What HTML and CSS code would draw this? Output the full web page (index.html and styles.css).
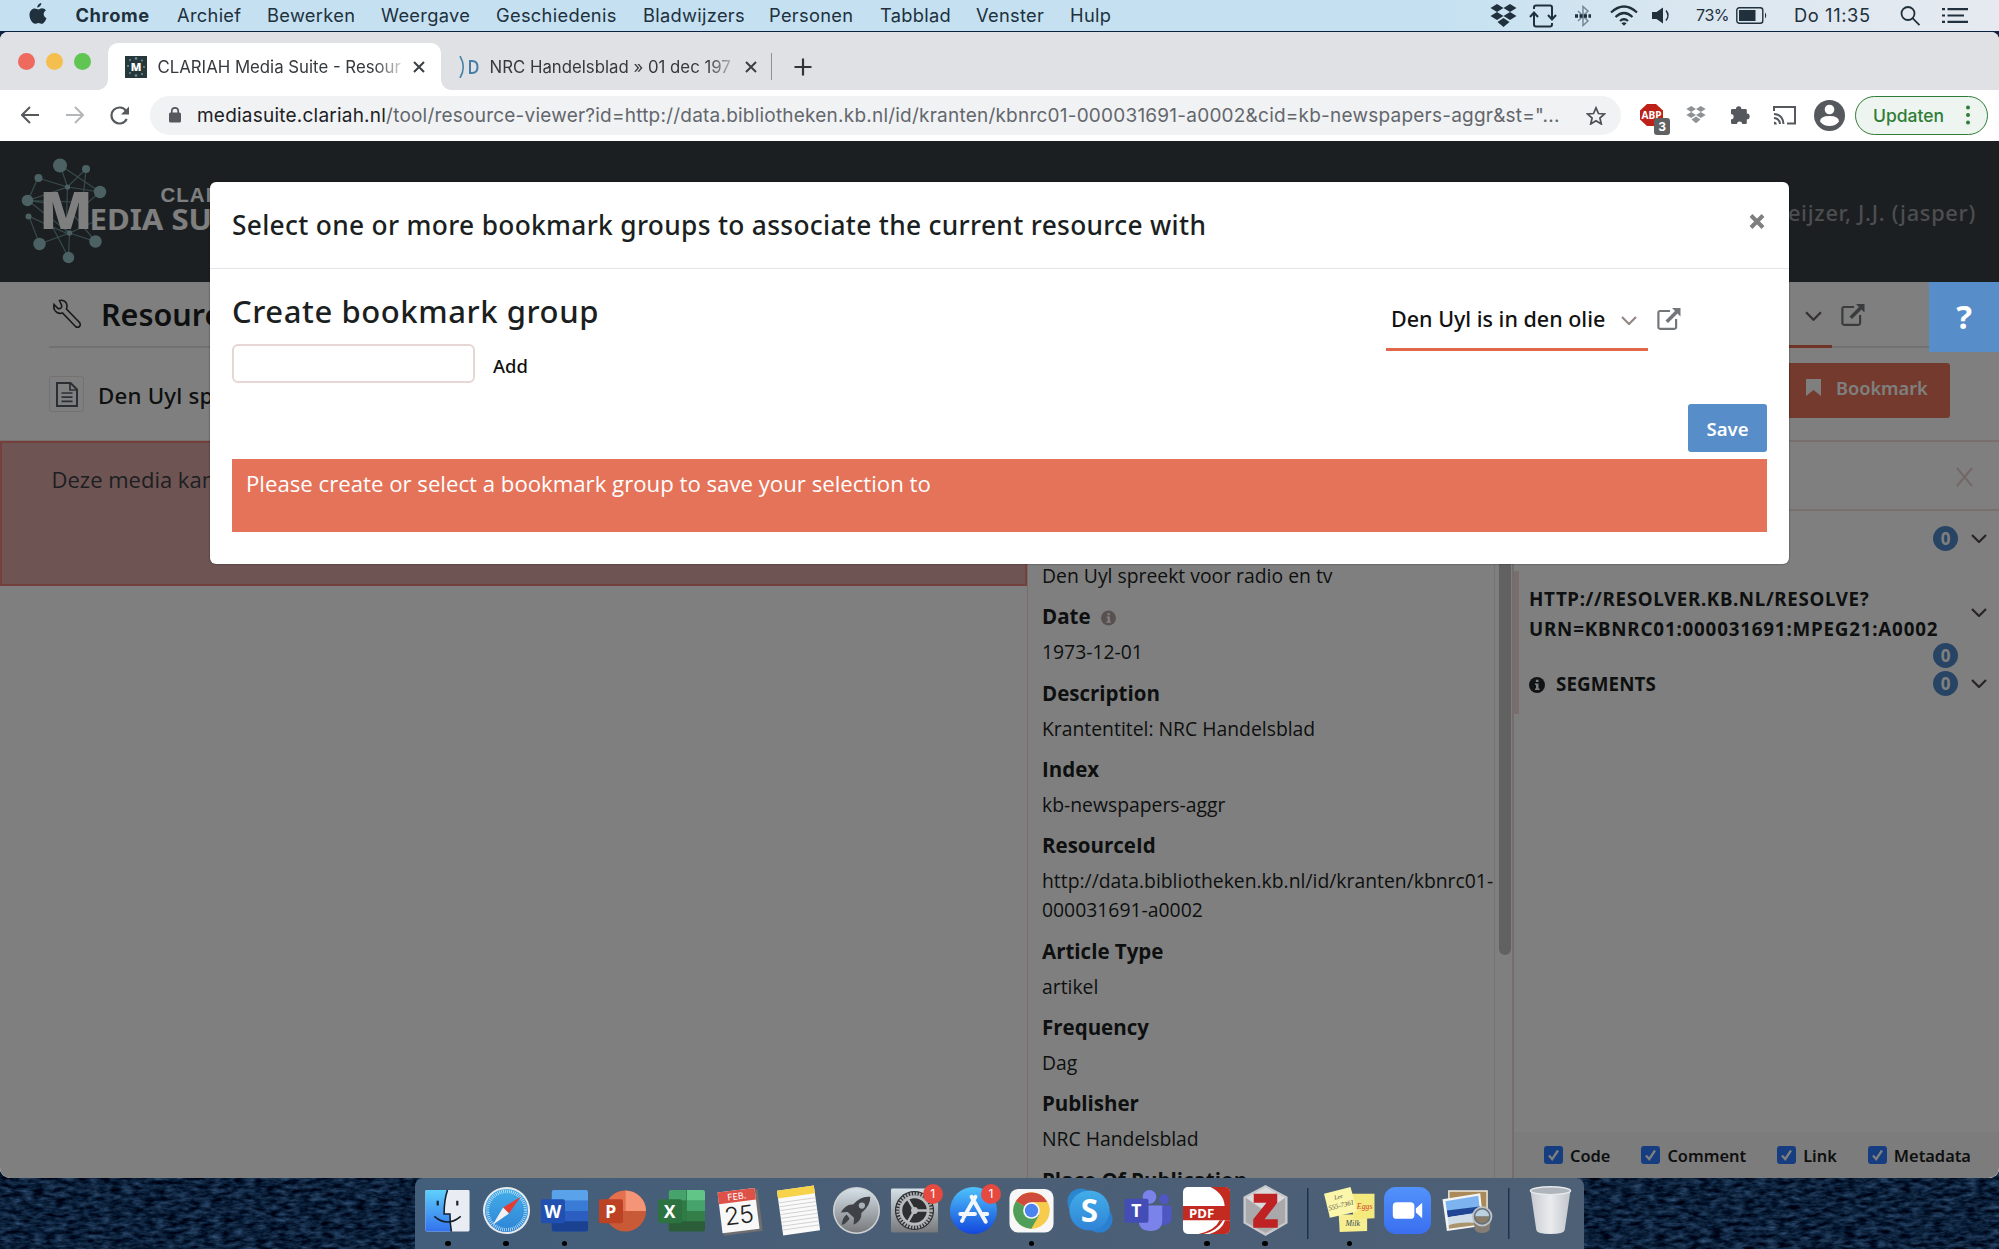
FILE: index.html
```html
<!DOCTYPE html>
<html lang="nl">
<head>
<meta charset="utf-8">
<title>CLARIAH Media Suite - Resource Viewer</title>
<link rel="stylesheet" href="styles.css">
</head>
<body>
<svg class="defs" width="0" height="0" aria-hidden="true">
  <defs>
    <symbol id="chevron" viewBox="0 0 16 9"><path d="M1 1l7 7 7-7" fill="none" stroke="currentColor" stroke-width="2.200"/></symbol>
    <symbol id="external" viewBox="0 0 24 22"><path d="M13 3H3a1.6 1.6 0 0 0-1.6 1.6v14.6A1.6 1.6 0 0 0 3 20.800h14.500a1.600 1.600 0 0 0 1.600-1.600V11" fill="none" stroke="currentColor" stroke-width="2.2"/><path d="M15 0h8.500v8.500l-3-3-9.500 9.500-2.500-2.500 9.500-9.500z" fill="currentColor"/></symbol>
    <symbol id="dropbox" viewBox="0 0 27 24"><path d="M7 0l6.500 4L7 8 .5 4zM20 0l6.500 4L20 8l-6.500-4zM7 8l6.500 4L7 16 .5 12zM20 8l6.500 4-6.500 4-6.500-4zM13.500 14l6 4-6 5-6-5z" fill="currentColor"/></symbol>
    <symbol id="info" viewBox="0 0 16 16"><circle cx="8" cy="8" r="8" fill="currentColor"/><path d="M6.900 2.800h2.600v2.300H6.900zM6 6.500h3.500v5h1V13H6v-1.500h1V8H6z" fill="#fff"/></symbol>
    <symbol id="tick" viewBox="0 0 19 18"><rect width="19" height="18" rx="3" fill="#2a7bff"/><path d="M5 9.500l3.200 3.700L14 4.500" fill="none" stroke="#fff" stroke-width="2.300"/></symbol>
    <linearGradient id="gBlue" x2="0" y2="1"><stop stop-color="#4fc3fb"/><stop offset="1" stop-color="#1247dd"/></linearGradient>
    <linearGradient id="gFinder" x2="0" y2="1"><stop stop-color="#5fd0fb"/><stop offset="1" stop-color="#3272ee"/></linearGradient>
    <linearGradient id="gGrey" x2="0" y2="1"><stop stop-color="#d5e0e8"/><stop offset="1" stop-color="#77797b"/></linearGradient>
    <linearGradient id="gZoom" x2="0" y2="1"><stop stop-color="#5292fb"/><stop offset="1" stop-color="#3a6ff0"/></linearGradient>
    <linearGradient id="gTrash" x2="1" y2="0"><stop stop-color="#cfd3d8"/><stop offset=".5" stop-color="#f6f6f7"/><stop offset="1" stop-color="#c8ccd1"/></linearGradient>
    <linearGradient id="gSkype" x2="0" y2="1"><stop stop-color="#43aee9"/><stop offset="1" stop-color="#2e83d6"/></linearGradient>
    <filter id="sea" x="0" y="0" width="1" height="1" color-interpolation-filters="sRGB"><feTurbulence type="fractalNoise" baseFrequency=".09 .24" numOctaves="3" seed="4"/><feColorMatrix values=".35 0 0 0 -.13  .45 0 0 0 -.1  .55 0 0 0 -.05  0 0 0 0 1"/></filter>
  </defs>
</svg>

<div class="desktop">
  <svg class="wallpaper" aria-hidden="true"><rect width="100%" height="100%" filter="url(#sea)"/></svg>

  <div class="menubar">
    <svg class="apple" viewBox="0 0 18 22"><path d="M12.300 0c.200 2-1.800 4.500-4 4.500C8.100 2.300 10.200.200 12.300 0zM13 5.300c1.500 0 3 .800 3.900 2.100-3.300 2-2.700 6.200.6 7.500-.8 2.400-2.600 5.800-4.600 5.800-1.300 0-1.800-.8-3.400-.8s-2.200.8-3.400.8C3.700 20.700.5 16.500.5 12c0-4 2.600-6.500 5.200-6.500 1.600 0 2.700 1 3.800 1 1 0 2.100-1.200 3.500-1.200z" fill="#20303c"/></svg>
    <div class="menus">
      <b>Chrome</b><span>Archief</span><span>Bewerken</span><span>Weergave</span><span>Geschiedenis</span><span>Bladwijzers</span><span>Personen</span><span>Tabblad</span><span>Venster</span><span>Hulp</span>
    </div>
    <div class="status">
      <svg width="27" height="24"><use href="#dropbox"/></svg>
      <svg width="28" height="24" viewBox="0 0 28 24" fill="none" stroke="currentColor" stroke-width="2"><path d="M5 5V3.500Q5 1.500 7 1.500H21Q23 1.500 23 3.500V15M19 11l4 4.500 4-4.500M23 19v1.500q0 2-2 2H7q-2 0-2-2V9M1 13l4-4.500L9 13"/></svg>
      <svg width="16" height="22" viewBox="0 0 16 22" fill="none" stroke="#6f8592" stroke-width="1.400"><path d="M3 6l10 10-5 4.500V1.500L13 6 3 16"/><path d="M0 11h16" stroke="#20303c" stroke-width="3.500" stroke-dasharray="3 1.500"/></svg>
      <svg width="28" height="21" viewBox="0 0 28 21" fill="none" stroke="currentColor" stroke-width="2.200"><path d="M1 7.500q13-12 26 0M5.500 12q8.500-8 17 0M10 16q4-3.500 8 0"/><path d="M14 20.800l-2.600-2.600q2.600-2 5.200 0z" fill="currentColor" stroke="none"/></svg>
      <svg width="19" height="17" viewBox="0 0 19 17"><path d="M0 5h4.500L11 .5v16L4.500 12H0z" fill="currentColor"/><path d="M14 3.500q4 5 0 10" fill="none" stroke="currentColor" stroke-width="1.500"/></svg>
      <span class="percent">73%</span>
      <svg width="32" height="17" viewBox="0 0 32 17"><rect x=".8" y=".8" width="26" height="15.400" rx="2.500" fill="none" stroke="currentColor" stroke-width="1.400"/><rect x="3" y="3" width="16.500" height="11" fill="currentColor"/><path d="M29 5.500q2.500 3 0 6z" fill="currentColor"/></svg>
      <span class="clock">Do 11:35</span>
      <svg width="21" height="20" viewBox="0 0 21 20" fill="none" stroke="currentColor" stroke-width="1.800"><circle cx="8" cy="7.500" r="6.500"/><path d="M12.500 12.200l7 7"/></svg>
      <svg width="26" height="15" viewBox="0 0 26 15" stroke="currentColor" stroke-width="2.200"><path d="M0 1.200h3M5.500 1.200H26M0 7.500h3M5.500 7.500H22M0 13.800h3M5.500 13.800H26"/></svg>
    </div>
  </div>

  <div class="window">
    <div class="tabstrip">
      <div class="lights"><i class="red"></i><i class="yellow"></i><i class="green"></i></div>
      <div class="tab active">
        <svg width="22" height="22" viewBox="0 0 22 22"><rect width="22" height="22" fill="#26383c"/><g fill="#6f9296"><circle cx="5" cy="4" r="1"/><circle cx="11" cy="2.500" r="1.300"/><circle cx="17" cy="4.500" r="1"/><circle cx="3" cy="10" r="1"/><circle cx="19" cy="11" r="1"/><circle cx="5" cy="17" r="1"/><circle cx="11" cy="19.500" r="1.300"/><circle cx="17" cy="18" r="1"/></g><text x="11" y="15" text-anchor="middle" font-size="11" font-weight="900" fill="#fff" font-family="Noto Sans">M</text></svg>
        <span class="tab-title">CLARIAH Media Suite - Resour</span>
        <svg class="x" viewBox="0 0 12 12"><path d="M1 1l10 10M11 1L1 11"/></svg>
      </div>
      <div class="tab">
        <svg width="20" height="22" viewBox="0 0 20 22" fill="none" stroke="#447ea6" stroke-width="2"><path d="M1 0q6.500 11 0 22" stroke-width="1.500"/><path d="M11 5v12h2q5.500 0 5.500-6T13 5z"/></svg>
        <span class="tab-title">NRC Handelsblad » 01 dec 197</span>
        <svg class="x" viewBox="0 0 12 12"><path d="M1 1l10 10M11 1L1 11"/></svg>
      </div>
      <svg class="plus" viewBox="0 0 18 18"><path d="M9 .500v17M.500 9h17" stroke="#333" stroke-width="2.200"/></svg>
    </div>

    <div class="toolbar">
      <svg width="18" height="18" viewBox="0 0 18 18" fill="none" stroke="#55595e" stroke-width="2"><path d="M18 9H1.500M9 1L1 9l8 8"/></svg>
      <svg width="18" height="18" viewBox="0 0 18 18" fill="none" stroke="#b4b7ba" stroke-width="2"><path d="M0 9h16.500M9 1l8 8-8 8"/></svg>
      <svg width="20" height="19" viewBox="0 0 20 19"><path d="M16.700 13A8 8 0 1 1 16 4.800" fill="none" stroke="#55595e" stroke-width="2.200"/><path d="M19 .500V8.500h-8z" fill="#55595e"/></svg>
      <div class="omnibox">
        <svg width="12" height="16" viewBox="0 0 12 16"><rect y="5.500" width="12" height="10" rx="1.500" fill="#55595e"/><path d="M2.800 6V4a3.200 3.200 0 0 1 6.400 0v2" fill="none" stroke="#55595e" stroke-width="1.700"/></svg>
        <span class="url"><em>mediasuite.clariah.nl</em>/tool/resource-viewer?id=http://data.bibliotheken.kb.nl/id/kranten/kbnrc01-000031691-a0002&amp;cid=kb-newspapers-aggr&amp;st="...</span>
        <svg width="20" height="19" viewBox="0 0 20 19"><path d="M10 1.800l2.500 5.700 6 .5-4.600 4 1.400 6L10 14.800 4.700 18l1.400-6L1.500 8l6-.5z" fill="none" stroke="#4c5054" stroke-width="1.700"/></svg>
      </div>
      <div class="extensions">
        <span class="abp"><svg width="23" height="22" viewBox="0 0 23 22"><path d="M7 0h9l7 6.500v9L16 22H7l-7-6.500v-9z" fill="#bd2117"/><text x="11.500" y="15" text-anchor="middle" font-size="10.500" font-weight="700" fill="#fff" font-family="Noto Sans" textLength="20" lengthAdjust="spacingAndGlyphs">ABP</text></svg><b>3</b></span>
        <svg class="grey" width="20" height="18"><use href="#dropbox"/></svg>
        <svg width="21" height="20" viewBox="0 0 21 20"><path d="M6 4a2.700 2.700 0 0 1 5.400 0h4.100q1.300 0 1.300 1.300v3.200a2.900 2.900 0 0 1 0 5.800v3.400q0 1.300-1.300 1.300h-3.300a2.600 2.600 0 0 0-5.200 0H2.200Q1 19 1 17.700v-3.400a2.600 2.600 0 0 0 0-5.200V5.300Q1 4 2.200 4z" fill="#55595e"/></svg>
        <svg width="23" height="19" viewBox="0 0 23 19" fill="none" stroke="#55595e" stroke-width="2"><path d="M1 5V1h21v16.500h-8M1 8q9 .5 9.500 10M1 12q5.500.5 6 6"/><path d="M1 15.500q2.500.2 3 3H1z" fill="#55595e" stroke="none"/></svg>
        <svg width="31" height="31" viewBox="0 0 31 31"><circle cx="15.500" cy="15.500" r="15.500" fill="#55595e"/><circle cx="15.500" cy="9.500" r="4.800" fill="#fff"/><path d="M6 21.500q0-5.500 9.500-5.500t9.500 5.500q-3.500 4.500-9.500 4.500T6 21.500z" fill="#fff"/></svg>
      </div>
      <div class="update">Updaten<i></i></div>
    </div>

    <div class="page">
      <header class="site-header">
        <svg class="logo" width="400" height="140" viewBox="0 0 400 140">
          <g stroke="#6e9597" stroke-width="1.200" fill="none"><path d="M60 24l7.500 22L86 28M38 37l29.500 9L28 59.500 38 37M60 24l40 27-32.500-5L28 59.500l60 2L100 51M86 28l-4 40M67.500 46L66 92l-37-16.500L39.500 103l30-11L28 59.500M69.500 92l26 8.500L72 72M69.500 92l-1 24.500L52 85M69.500 92l26-12M28 59.500l20 3"/></g>
          <g fill="#97c2c6"><circle cx="60" cy="24.500" r="7"/><circle cx="86" cy="28" r="4"/><circle cx="38.500" cy="37" r="4"/><circle cx="67.500" cy="46" r="2.600"/><circle cx="100" cy="51" r="6.200"/><circle cx="27.500" cy="59.500" r="5.800"/><circle cx="28.500" cy="75.500" r="3"/><circle cx="39.500" cy="103" r="6.200"/><circle cx="69.500" cy="92" r="2.700"/><circle cx="95.500" cy="100.500" r="6.200"/><circle cx="68.500" cy="116.500" r="5.700"/></g>
          <g fill="#fff" font-family="Noto Sans" font-weight="700"><text x="39.500" y="88" font-size="52" font-weight="900" textLength="53" lengthAdjust="spacingAndGlyphs">M</text><text x="89.500" y="88.500" font-size="29" textLength="170" lengthAdjust="spacingAndGlyphs">EDIA SUITE</text><text x="160.500" y="61" font-size="20.500" font-family="Liberation Sans" letter-spacing="1">CLARIAH</text></g>
        </svg>
        <span class="user">Keijzer, J.J. (jasper)</span>
      </header>

      <div class="title-row">
        <svg width="30" height="30" viewBox="0 0 30 30"><path d="M7.500 1.500q5-1 7 3 1 2.500 0 5.500L27.500 23.500q1.500 2 0 4-2 1.500-4 0L10.500 14q-3 1-5.500-.5-4-2.500-3-8L6 9.500q2 .5 3-.5t.5-3z" fill="none" stroke="#333" stroke-width="1.600"/></svg>
        <h1>Resource Viewer</h1>
        <div class="page-picker"><svg width="17" height="10"><use href="#chevron"/></svg></div>
        <svg class="ext" width="24" height="22"><use href="#external"/></svg>
      </div>
      <div class="doc-row">
        <div class="doc-icon"><svg width="22" height="25" viewBox="0 0 22 25" fill="none" stroke="#555e69" stroke-width="2"><path d="M1 1h13.500L21 7.500V24H1z"/><path d="M14 1v7h7M5.500 11h11M5.500 15.200h11M5.500 19.400h11" stroke-width="1.700"/></svg></div>
        <h2>Den Uyl spreekt</h2>
        <div class="bookmark-btn"><svg width="15" height="17" viewBox="0 0 15 17"><path d="M0 0h15v17l-7.500-6L0 17z" fill="#fff"/></svg>Bookmark</div>
      </div>

      <div class="columns">
        <section class="viewer"><div class="error">Deze media kan</div></section>
        <section class="meta">
          <dl>
            <dd class="lead">Den Uyl spreekt voor radio en tv</dd>
            <dt>Date <svg width="15" height="16"><use href="#info"/></svg></dt><dd>1973-12-01</dd>
            <dt>Description</dt><dd>Krantentitel: NRC Handelsblad</dd>
            <dt>Index</dt><dd>kb-newspapers-aggr</dd>
            <dt>ResourceId</dt><dd>http://data.bibliotheken.kb.nl/id/kranten/kbnrc01-<br>000031691-a0002</dd>
            <dt>Article Type</dt><dd>artikel</dd>
            <dt>Frequency</dt><dd>Dag</dd>
            <dt>Publisher</dt><dd>NRC Handelsblad</dd>
            <dt>Place Of Publication</dt>
          </dl>
          <div class="scrollbar"><i></i></div>
        </section>
        <section class="annotations">
          <div class="close-row"><svg width="17" height="20" viewBox="0 0 17 20"><path d="M1 1l15 18M16 1L1 19" stroke="#e8d0cc" stroke-width="2"/></svg></div>
          <div class="row first"><b class="count">0</b><svg width="16" height="9"><use href="#chevron"/></svg></div>
          <div class="group">
            <div class="row resource"><span><q class="l1">http://resolver.kb.nl/resolve?</q><br><q class="l2">urn=KBNRC01:000031691:mpeg21:a0002</q></span><svg width="16" height="9"><use href="#chevron"/></svg></div>
            <div class="row only"><b class="count">0</b></div>
            <div class="row segments"><svg class="i" width="16" height="16"><use href="#info"/></svg><span>Segments</span><b class="count">0</b><svg width="16" height="9"><use href="#chevron"/></svg></div>
          </div>
          <footer class="filters">
            <label><svg width="19" height="18"><use href="#tick"/></svg>Code</label>
            <label><svg width="19" height="18"><use href="#tick"/></svg>Comment</label>
            <label><svg width="19" height="18"><use href="#tick"/></svg>Link</label>
            <label><svg width="19" height="18"><use href="#tick"/></svg>Metadata</label>
          </footer>
        </section>
      </div>

      <div class="backdrop"></div>
      <div class="help">?</div>
      <div class="modal">
        <div class="modal-head"><h3>Select one or more bookmark groups to associate the current resource with</h3><svg width="16" height="15" viewBox="0 0 16 15"><path d="M2 1.500l12 12M14 1.500l-12 12" stroke="#7f7f7f" stroke-width="4"/></svg></div>
        <div class="modal-body">
          <div class="modal-top">
            <div class="create"><h4>Create bookmark group</h4><div class="create-row"><input type="text"><span>Add</span></div></div>
            <div class="picker"><div class="select">Den Uyl is in den olie<svg width="16" height="9"><use href="#chevron"/></svg></div><svg class="ext" width="24" height="22"><use href="#external"/></svg></div>
          </div>
          <div class="save">Save</div>
          <div class="alert">Please create or select a bookmark group to save your selection to</div>
        </div>
      </div>
    </div>
  </div>

  <div class="dock">
    <div class="app run"><svg viewBox="0 0 50 50"><rect x="2.500" y="4" width="45" height="42.500" rx="1.500" fill="#e9edf3"/><path d="M25 4H4q-1.500 0-1.500 1.500V45q0 1.500 1.500 1.500h25q-1.500-8-1.500-18h-6q0-14 3.500-24.500z" fill="url(#gFinder)"/><path d="M15 15v5M35 15v5" stroke="#15202c" stroke-width="2.200"/><path d="M11.500 31q13.500 11.500 27 0M25 4q-3.500 10.500-3.500 24.500h6q0 10 1.500 18" fill="none" stroke="#15202c" stroke-width="1.600"/></svg></div>
    <div class="app run"><svg viewBox="0 0 50 50"><circle cx="25" cy="25" r="24" fill="#e8eaec"/><circle cx="25" cy="25" r="22" fill="url(#gSkype)"/><circle cx="25" cy="25" r="19.500" fill="none" stroke="#d7eefb" stroke-width="3.500" stroke-dasharray=".7 1.300"/><path d="M39.500 11L21.500 22l6 6z" fill="#e23c34"/><path d="M11 39.500L21.500 22l6 6z" fill="#f1f1f1"/></svg></div>
    <div class="app run"><svg viewBox="0 0 50 50"><rect x="12" y="4" width="37" height="42.500" rx="2" fill="#2b5ec0"/><path d="M12 15V6q0-2 2-2h33q2 0 2 2v9z" fill="#5aa2ea"/><path d="M12 15h37v10.500H12z" fill="#3a7bd5"/><path d="M12 36h37v8.500q0 2-2 2H14q-2 0-2-2z" fill="#1a4290"/><rect x="1" y="13.500" width="24.500" height="24.500" rx="2" fill="#1f50b2"/><text class="glyph" x="13" y="32.500">W</text></svg></div>
    <div class="app"><svg viewBox="0 0 50 50"><circle cx="28" cy="25.500" r="21" fill="#c85a38"/><path d="M28 25.500V4.500a21 21 0 0 0-21 21z" fill="#e4704d"/><path d="M28 25.500V4.500a21 21 0 0 1 21 21z" fill="#f39576"/><rect x="1" y="13.500" width="24.500" height="24.500" rx="2" fill="#bd4224"/><text class="glyph" x="13" y="32.500">P</text></svg></div>
    <div class="app"><svg viewBox="0 0 50 50"><rect x="12" y="4" width="37" height="42.500" rx="2" fill="#2b5e38"/><path d="M12 15V6q0-2 2-2h16v11z" fill="#46a36b"/><path d="M30.500 4H47q2 0 2 2v9H30.500z" fill="#61c588"/><path d="M12 15h19v21H12z" fill="#2f7a45"/><path d="M30.500 15H49v10.500H30.500z" fill="#46a36b"/><path d="M30.500 25.500H49V36H30.500z" fill="#347e4a"/><rect x="1" y="13.500" width="24.500" height="24.500" rx="2" fill="#2c7341"/><text class="glyph" x="13" y="32.500">X</text></svg></div>
    <div class="app"><svg viewBox="0 0 50 50"><g transform="rotate(-7 25 25)"><rect x="6" y="5.500" width="40" height="43" fill="#6d6f70"/><rect x="5" y="4" width="38" height="42" fill="#f8f8f8"/><rect x="5" y="4" width="38" height="12" fill="#de5148"/><text x="24" y="13.500" text-anchor="middle" font-size="9" fill="#fff" font-family="Inter">FEB.</text><text x="24" y="38.500" text-anchor="middle" font-size="25" fill="#222" font-weight="300" font-family="Inter">25</text></g></svg></div>
    <div class="app"><svg viewBox="0 0 50 50"><g transform="rotate(-8 25 25)"><rect x="6" y="2" width="38" height="46" fill="#fafafa"/><path d="M6 2h38v8H6z" fill="#f7d349"/><path d="M6 14.500h38M6 18.500h38M6 22.500h38M6 26.500h38M6 30.500h38M6 34.500h38M6 38.500h38M6 42.500h38" stroke="#c9c9c9" stroke-width=".8"/></g></svg></div>
    <div class="app"><svg viewBox="0 0 50 50"><circle cx="25" cy="25" r="24" fill="#cfd2d4"/><circle cx="25" cy="25" r="22.500" fill="url(#gGrey)"/><path d="M39 11q-10-1-17.500 8-7-1-12.500 8l7-.5 6.500 6-.5 7q8.500-4 8-12Q39.500 20 39 11zM15 29q-4.500 3-5 11 5-2 8-6.500z" fill="#3f4347"/><circle cx="30.500" cy="20" r="3.200" fill="#aab0b4"/></svg></div>
    <div class="app"><svg viewBox="0 0 50 50"><rect x="1" y="2.500" width="48" height="45" rx="1.500" fill="url(#gGrey)"/><circle cx="25" cy="25" r="20" fill="#2d2f31"/><circle cx="25" cy="25" r="17" fill="none" stroke="#a9acae" stroke-width="3.500" stroke-dasharray="1.800 1.200"/><circle cx="25" cy="25" r="14" fill="none" stroke="#b9bcbe" stroke-width="3"/><path d="M25 25L18 13M25 25h14M25 25l-7 12" stroke="#b9bcbe" stroke-width="2.500"/><circle cx="25" cy="25" r="3.500" fill="#b9bcbe"/></svg><b>1</b></div>
    <div class="app"><svg viewBox="0 0 50 50"><circle cx="25" cy="25" r="24" fill="url(#gBlue)"/><g stroke="#f3f6fa" stroke-width="4" stroke-linecap="round"><path d="M27 11L15 32M23 11l14.500 25.500M11.500 28.500h15M35 28.500h4M14 34.500l-.8 1.200"/></g></svg><b>1</b></div>
    <div class="app run"><svg viewBox="0 0 50 50"><rect x="2.500" y="3" width="45" height="44.500" rx="9" fill="#f7f7f7"/><circle cx="25" cy="25" r="18.500" fill="#f7cb4c"/><path d="M25 25L9 15.500A18.500 18.500 0 0 1 41.200 16.500H25z" fill="#cf4b3c"/><path d="M9 15.500A18.500 18.500 0 0 0 25 43.500l8-14-8-4.500z" fill="#4f9f5b"/><path d="M41.200 16.500H25l8 13-8 14A18.500 18.500 0 0 0 41.200 16.500z" fill="#f7cb4c"/><circle cx="25" cy="25" r="8.500" fill="#f7f7f7"/><circle cx="25" cy="25" r="6.800" fill="#4b84ee"/></svg></div>
    <div class="app"><svg viewBox="0 0 50 50"><circle cx="16" cy="16" r="13.500" fill="#2a87cf"/><circle cx="35" cy="34" r="13.500" fill="#2a7fd0"/><circle cx="25" cy="25" r="20.500" fill="url(#gSkype)"/><text x="25" y="36.500" text-anchor="middle" font-size="32" font-weight="700" fill="#fff" font-family="Noto Sans">S</text></svg></div>
    <div class="app"><svg viewBox="0 0 50 50"><circle cx="41" cy="13.500" r="5" fill="#4e57c2"/><path d="M34 20h14.500v12q0 8-8 8H34z" fill="#4e57c2"/><circle cx="26" cy="11" r="7" fill="#7b83eb"/><path d="M15 20h24v15q0 11-12 11T15 35z" fill="#7b83eb"/><rect x=".500" y="13" width="24.500" height="24.500" rx="2" fill="#444db5"/><text class="glyph" x="12.700" y="32">T</text></svg></div>
    <div class="app run"><svg viewBox="0 0 50 50"><rect x="1" y="1" width="48" height="48" rx="5" fill="#fff"/><path d="M29 1h15q5 0 5 5v14.500h-5.500Q43 8 29 1zM1 20.500h48V35H1z" fill="#c32a20"/><path d="M44 35h5v9q0 5-5 5H28q13-4 16-14zM17 49q17-4 21.500-14H42Q36 46 22 49z" fill="#c32a20"/><text x="20" y="32.500" text-anchor="middle" font-size="13.500" font-weight="700" fill="#fff" font-family="Noto Sans">PDF</text></svg></div>
    <div class="app run"><svg viewBox="0 0 50 50"><path d="M25-1l22.500 12v27L25 51 2.500 38V11z" fill="#c8c9cc"/><path d="M25 1l20 11v25L25 48 5 37V12z" fill="#a9a8aa"/><path d="M25 1l20 11-20 14L5 12z" fill="#d9dadd"/><path d="M13 8h24v9L24 34h13.500v8.500H12.500V34L26 17H13z" fill="#bf2222"/></svg></div>
    <i class="sep"></i>
    <div class="app run"><svg viewBox="0 0 50 50"><path d="M14 29h29v17l-28 1z" fill="#f6ee90"/><path d="M27 8h23.500v25L29 34z" fill="#f4e97d"/><path d="M-1 8l27-7 7 25-28 6.500z" fill="#fbf6a9"/><g font-family="Liberation Serif" font-style="italic"><text x="32.500" y="23" font-size="8" fill="#d2452b">Eggs</text><text x="21" y="41" font-size="8" fill="#345">Milk</text><text x="4" y="25" font-size="7" fill="#444" transform="rotate(-14 4 25)">555-7361</text><text x="10" y="14" font-size="6" fill="#444" transform="rotate(-14 10 14)">Lee</text></g></svg></div>
    <div class="app"><svg viewBox="0 0 50 50"><rect x="1" y="1" width="48" height="48" rx="12" fill="url(#gZoom)"/><rect x="10" y="16.500" width="22" height="17" rx="4" fill="#fff"/><path d="M33.500 23l6.500-6v16l-6.500-6z" fill="#fff"/></svg></div>
    <div class="app"><svg viewBox="0 0 50 50"><path d="M7 5h39v34H7z" fill="#a98a58" stroke="#efe9dc" stroke-width="1.500"/><path d="M.500 13.500L39 7.500l3.500 33-37.500 5.500z" fill="#f4f4f4"/><path d="M3.500 15.500L37 10l1.500 13-33 6z" fill="#7db3ee"/><path d="M5 25l33.500-4 1 6-33.500 5z" fill="#1f4694"/><path d="M6 32q15-3 33.500-5l1 9L7 43z" fill="#cfdde8"/><path d="M7 40q10-4 34-2v1L7 43.500z" fill="#a9946c"/><path d="M32 33h18l-1.500 12q-2.500 3-7.500 3t-7.500-3z" fill="#847d73"/><circle cx="41" cy="31" r="9.500" fill="#62707d" stroke="#bfc3c6" stroke-width="1.800"/><path d="M34 31a7 7 0 0 1 14 0z" fill="#bcd0e0"/><path d="M34 31a7 7 0 0 0 14 0z" fill="#8a7d68"/></svg></div>
    <i class="sep"></i>
    <div class="app"><svg viewBox="0 0 50 50"><path d="M4.500 4l6 41q.5 4 14.500 4t14.500-4l6-41z" fill="url(#gTrash)" opacity=".93"/><ellipse cx="25" cy="4.800" rx="20.500" ry="4" fill="#aeb5bc" stroke="#e6e8ea" stroke-width="1.500"/></svg></div>
  </div>
</div>
</body>
</html>
```
FILE: styles.css
```css
* { box-sizing: border-box; }
html, body { margin: 0; height: 100%; overflow: hidden; }
body { font-family: "Inter", "Noto Sans", sans-serif; color: #1b1f22; }
h1, h2, h3, h4, dl, dd { margin: 0; font-weight: 500; }
svg { display: block; flex: none; }
.defs { position: absolute; }

.desktop { position: relative; width: 1999px; height: 1249px; background: #0c2340; overflow: hidden; }
.wallpaper { position: absolute; left: 0; top: 1160px; width: 100%; height: 89px; }

/* macOS menu bar */
.menubar { position: relative; display: flex; align-items: center; height: 31px; padding-left: 29px; background: linear-gradient(90deg, #c5e1f1 0 72%, #dbe7f0 85%, #e6eaf0); color: #20303c; font-size: 18.3px; line-height: 31px; white-space: nowrap; }
.apple { width: 18px; height: 22px; margin: -3px 28.500px 0 0; }
.menus { display: grid; grid-template-columns: 101.500px 90px 114px 115px 147px 126px 111px 96px 94px 60px; letter-spacing: .300px; }
.menus b { letter-spacing: .6px; }
.status { position: absolute; right: 31px; top: 0; height: 31px; display: flex; align-items: center; }
.status svg:nth-child(2) { margin-left: 12px; }
.status svg:nth-child(3) { margin-left: 18px; }
.status svg:nth-child(4) { margin-left: 19px; margin-top: -1px; }
.status svg:nth-child(5) { margin-left: 14px; }
.percent { width: 40px; margin-left: 25px; font-size: 16px; letter-spacing: -.4px; }
.clock { width: 80px; margin: 0 26px 0 26px; letter-spacing: .6px; }
.status svg:last-child { margin-left: 21px; }

/* browser window */
.window { position: relative; height: 1146px; margin-top: 1px; border-radius: 8px 8px 10px 10px; overflow: hidden; background: #fff; }
.tabstrip { display: flex; align-items: flex-end; height: 58px; background: #dfe1e5; }
.lights { display: flex; gap: 11px; padding: 0 17.500px 20px 17.500px; }
.lights i { width: 17px; height: 17px; border-radius: 50%; }
.red { background: #ee6a5f; }
.yellow { background: #f5bf4f; }
.green { background: #61c554; }
.tab { position: relative; display: flex; align-items: center; height: 47px; width: 331px; padding: 0 15px 0 18px; font-size: 16.800px; color: #36393d; }
.tab.active { width: 333px; padding: 0 16px 0 17px; background: #fff; border-radius: 10px 10px 0 0; }
.tab.active::before, .tab.active::after { content: ""; position: absolute; bottom: 0; width: 10px; height: 10px; background: radial-gradient(circle at 0 0, transparent 9.500px, #fff 10px); }
.tab.active::before { left: -10px; }
.tab.active::after { right: -10px; transform: scaleX(-1); }
.tab-title { width: 246px; margin: 0 auto 0 10.500px; white-space: nowrap; -webkit-mask-image: linear-gradient(90deg, #000 88%, #0002); mask-image: linear-gradient(90deg, #000 88%, #0002); }
.x { width: 12px; height: 12px; stroke: #3c3f43; stroke-width: 2; }
.plus { width: 18px; height: 18px; margin: 0 0 14.500px 22px; }
.tab:not(.active)::after { content: ""; position: absolute; right: 0; top: 10px; width: 1px; height: 27px; background: #8d9094; }
.toolbar { display: flex; align-items: center; height: 51px; padding: 0 11px 1px 21px; background: #fff; }
.toolbar > svg + svg { margin-left: 27px; }
.toolbar > svg:nth-child(3) { margin-left: 26px; }
.omnibox { display: flex; align-items: center; width: 1471px; height: 39px; margin-left: 20px; padding: 0 15px 0 19px; border-radius: 20px; background: #f1f2f4; }
.url { width: 1390px; margin: 0 auto 0 16px; font-size: 19px; letter-spacing: .22px; white-space: nowrap; color: #63676c; }
.url em { font-style: normal; color: #202124; }
.extensions { display: flex; align-items: center; margin-left: 19px; }
.abp { position: relative; margin-right: 23px; }
.abp b { position: absolute; left: 14px; top: 14px; width: 16px; height: 17px; border-radius: 3px; background: #5f6163; color: #fff; font-size: 12px; line-height: 17px; text-align: center; }
.grey { color: #8f9295; margin-right: 24px; }
.extensions svg:nth-child(3) { margin-right: 22px; }
.extensions svg:nth-child(4) { margin-right: 18px; }
.update { display: flex; align-items: center; width: 133px; height: 39px; margin-left: auto; padding: 0 17px 0 17px; border: 1.500px solid #2f7d38; border-radius: 20px; background: #eef4ef; color: #2f7d38; font-size: 17.500px; font-weight: 500; }
.update i { width: 4px; height: 4px; margin-left: auto; border-radius: 50%; background: #2f7d38; box-shadow: 0 -7.500px #2f7d38, 0 7.500px #2f7d38; }

/* site */
.page { position: relative; height: 1037px; background: #fff; font-family: "Noto Sans", sans-serif; }
.site-header { display: flex; justify-content: space-between; height: 140.500px; background: #363e44; }
.user { padding: 54px 23px 0 0; font-size: 21.800px; line-height: 36px; font-weight: 500; letter-spacing: .700px; color: #9a9c9e; }
.title-row { display: flex; align-items: center; height: 66.500px; margin: 0 70px 0 49px; padding-left: 3px; border-bottom: 2px solid #e5e0e0; }
.title-row h1 { margin: 1px auto 0 19px; font-size: 30.500px; font-weight: 600; letter-spacing: 0; }
.page-picker { display: flex; align-items: center; justify-content: flex-end; align-self: flex-start; width: 60px; height: 66px; padding: 6px 10px 0 0; border-bottom: 3.500px solid #e2674a; color: #6d6260; }
.title-row .ext { margin: 3px 64px 0 9px; color: #73777b; }
.doc-row { display: flex; align-items: center; height: 92px; padding: 0 49px; }
.doc-icon { display: grid; place-items: center; width: 35px; height: 36px; border: 1.500px solid #e6e2e2; border-radius: 3px; }
.doc-row h2 { margin: 2px 0 0 14px; font-size: 22.300px; font-weight: 500; letter-spacing: .2px; }
.bookmark-btn { display: flex; align-items: center; width: 180px; height: 55px; margin: -8px 0 0 auto; padding: 0 0 5px 36px; gap: 15px; border-radius: 3px; background: #e7745a; color: #fff; font-size: 18.200px; font-weight: 600; }
.columns { display: flex; height: 738px; border-top: 2px solid #f0dedc; }
.viewer { width: 1027px; }
.error { height: 145px; margin-top: -1px; padding: 19px 49.500px; border: 2px solid #e8807c; background: #dea8a8; font: 22px/34px "Open Sans", sans-serif; color: #3b4044; }
.meta { display: flex; width: 487px; border: solid #ecd9d7; border-width: 0 2px 0 1.500px; font-family: "Open Sans", sans-serif; overflow: hidden; }
.meta dl { width: 466px; padding: 119px 0 0 14px; font-size: 19.350px; line-height: 29.300px; white-space: nowrap; }
.meta dt { display: flex; align-items: center; gap: 10px; margin-bottom: 5.700px; padding-top: 1px; font-size: 20.500px; font-weight: 700; }
.meta dt svg { color: #b3a3a0; margin-top: 2px; }
.meta dd { margin-bottom: 11px; }
.scrollbar { flex: 1; border-left: 1px solid #f0e4e3; padding-left: 4px; }
.scrollbar i { display: block; width: 12px; height: 513px; border-radius: 0 0 6px 6px; background: #c3c3c3; }
.annotations { flex: 1; display: flex; flex-direction: column; color: #1b1f22; }
.close-row { display: flex; align-items: center; justify-content: flex-end; height: 69px; padding: 3px 26px 0 0; border-bottom: 2px solid #f0dedc; }
.row { display: flex; align-items: center; height: 55px; padding: 0 12px 0 10px; color: #51494a; }
.row > svg:last-child { margin-left: 13px; }
.count { display: grid; place-items: center; width: 25px; height: 25px; margin-left: auto; border-radius: 50%; background: #5189c9; color: #fff; font-size: 17px; line-height: 25px; font-weight: 700; }
.group { border-left: 5px solid #f0dcdb; height: 143px; margin-top: 5px; }
.row span { font-size: 18.800px; line-height: 29.600px; font-weight: 700; color: #1b1f22; text-transform: uppercase; white-space: nowrap; }
.row q { quotes: none; }
.l1 { letter-spacing: .650px; }
.l2 { letter-spacing: .800px; }
.row.resource { height: 88px; }
.row.resource svg { margin: -5px 0 0 auto; }
.row.only { height: 25px; margin-top: -16px; padding-right: 41px; }
.row.segments { height: 30px; }
.segments span { margin: 4px 0 0 11px; letter-spacing: .100px; }
.segments .i { color: #23282c; margin-top: 4px; }
.filters { display: flex; align-items: center; height: 46px; margin-top: auto; padding: 0 28px 0 30px; justify-content: space-between; background: #f8f8f8; font-size: 16.400px; font-weight: 600; }
.filters label { display: flex; align-items: center; gap: 7px; }

.backdrop { position: absolute; inset: 0; background: rgba(0, 0, 0, .5); }
.help { position: absolute; right: 0; top: 140.500px; width: 70px; height: 70px; background: #578dc8; color: #fff; font-size: 33px; line-height: 69px; font-weight: 700; text-align: center; }

/* dialog */
.modal { position: absolute; left: 210px; top: 40.500px; width: 1579px; height: 382px; border-radius: 6px; background: #fff; box-shadow: 0 0 2px #0008; }
.modal-head { display: flex; align-items: center; justify-content: space-between; height: 87px; padding: 0 24px 0 22px; border-bottom: 1.500px solid #e4e5e8; }
.modal-head h3 { font-size: 26.300px; letter-spacing: .320px; }
.modal-head svg { margin-top: -7px; }
.modal-body { padding: 22px 22px 0; }
.modal-top { display: flex; justify-content: space-between; height: 113.500px; }
.create h4 { font-size: 31px; line-height: 40px; letter-spacing: .580px; }
.create-row { display: flex; align-items: center; margin-top: 13px; font-size: 18.400px; font-weight: 500; color: #111; }
.create-row input { width: 243px; height: 39px; margin: 0 18px 0 0; padding: 0; border: 2px solid #e6d6d4; border-radius: 6px; background: #fff; }
.create-row span { margin-top: 5px; }
.picker { display: flex; align-items: flex-start; margin-right: 86px; }
.select { display: flex; align-items: center; width: 262px; height: 60px; padding: 0 11px 2px 5px; justify-content: space-between; border-bottom: 3px solid #e2674a; font-size: 21.500px; font-weight: 500; color: #111; white-space: nowrap; }
.select svg { color: #948886; margin-top: 5px; }
.picker .ext { margin: 17px 0 0 9px; color: #73777b; }
.save { width: 79px; height: 48px; margin: 0 0 7px auto; border-radius: 3px; background: #578dc8; color: #fff; font-size: 18.500px; line-height: 50px; font-weight: 600; text-align: center; }
.alert { height: 73px; padding: 8px 14px; background: #e57359; color: #fff; font: 22.200px/34px "Open Sans", sans-serif; }

/* dock */
.dock { position: absolute; left: 414.500px; top: 1178px; display: flex; width: 1169px; height: 71px; padding-left: 4px; border-radius: 8px 8px 0 0; background: linear-gradient(90deg, #425e7b, #4a5e76 40%, #4d6076); }
.app { position: relative; width: 58.400px; padding: 8px 4.700px 0; }
.app svg { width: 49px; height: 49px; overflow: visible; }
.app.run::after { content: ""; position: absolute; left: 26.500px; bottom: 3px; width: 5.500px; height: 5.500px; border-radius: 50%; background: #000; }
.app b { position: absolute; left: 37px; top: 6px; width: 20px; height: 20px; border-radius: 50%; background: #e5493f; color: #fff; font-size: 12px; line-height: 20px; font-weight: 400; text-align: center; }
.sep { width: 26px; height: 51px; margin-top: 10px; background: linear-gradient(#1b3350, #1b3350) center / 1.500px 100% no-repeat; }
.glyph { font: 700 18px "Noto Sans", sans-serif; fill: #fff; text-anchor: middle; }
```
